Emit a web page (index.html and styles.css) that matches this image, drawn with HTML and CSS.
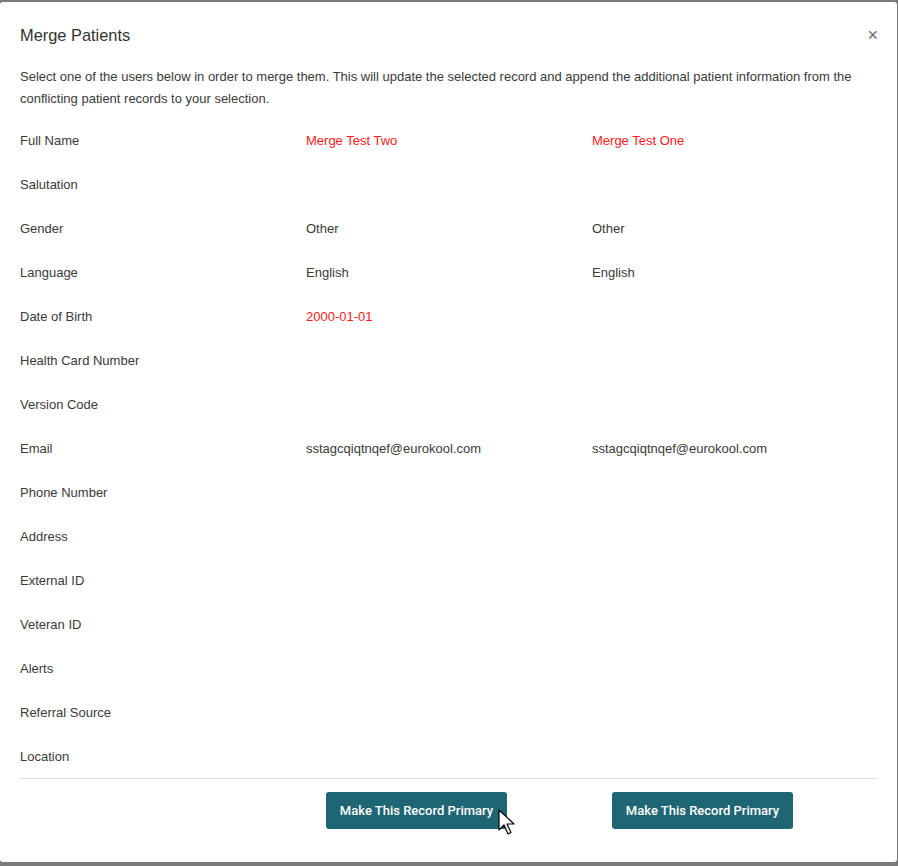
FILE: index.html
```html
<!DOCTYPE html>
<html>
<head>
<meta charset="utf-8">
<link rel="stylesheet" href="styles.css">
</head>
<body>
<div class="modal">
  <div class="modal-header">
    <h2 class="title">Merge Patients</h2>
    <span class="close">&times;</span>
  </div>
  <div class="modal-body">
    <p class="desc">Select one of the users below in order to merge them. This will update the selected record and append the additional patient information from the conflicting patient records to your selection.</p>
    <div class="rows">
      <div class="row"><div>Full Name</div><div class="diff">Merge Test Two</div><div class="diff">Merge Test One</div></div>
      <div class="row"><div>Salutation</div><div></div><div></div></div>
      <div class="row"><div>Gender</div><div>Other</div><div>Other</div></div>
      <div class="row"><div>Language</div><div>English</div><div>English</div></div>
      <div class="row"><div>Date of Birth</div><div class="diff">2000-01-01</div><div></div></div>
      <div class="row"><div>Health Card Number</div><div></div><div></div></div>
      <div class="row"><div>Version Code</div><div></div><div></div></div>
      <div class="row"><div>Email</div><div>sstagcqiqtnqef@eurokool.com</div><div>sstagcqiqtnqef@eurokool.com</div></div>
      <div class="row"><div>Phone Number</div><div></div><div></div></div>
      <div class="row"><div>Address</div><div></div><div></div></div>
      <div class="row"><div>External ID</div><div></div><div></div></div>
      <div class="row"><div>Veteran ID</div><div></div><div></div></div>
      <div class="row"><div>Alerts</div><div></div><div></div></div>
      <div class="row"><div>Referral Source</div><div></div><div></div></div>
      <div class="row"><div>Location</div><div></div><div></div></div>
    </div>
    <div class="actions">
      <div></div>
      <div class="btn-cell"><button class="btn">Make This Record Primary</button>
        <svg class="cursor" width="20" height="28" viewBox="0 0 20 28"><path d="M1 1 L1 21 L6 16 L10 25 L13 23.5 L9 15 L16 15 Z" fill="#fff" stroke="#000" stroke-width="1.2" stroke-linejoin="round"/></svg>
      </div>
      <div class="btn-cell"><button class="btn">Make This Record Primary</button></div>
    </div>
  </div>
</div>
</body>
</html>
```
FILE: styles.css
```css
html, body {
  margin: 0;
  padding: 0;
  background: #7b7b7b;
  height: 866px;
  overflow: hidden;
}
body {
  padding-top: 2px;
  box-sizing: border-box;
  font-family: "Liberation Sans", Arial, sans-serif;
  color: #3a3a3a;
}
.modal {
  width: 897px;
  height: 860px;
  background: #fff;
  border-radius: 3px;
  box-sizing: border-box;
}
.modal-header {
  display: flex;
  align-items: center;
  justify-content: space-between;
  padding: 21px 20px 19px 20px;
}
.title {
  margin: 0;
  font-size: 16.4px;
  font-weight: 400;
  line-height: 24px;
  color: #333;
}
.close {
  font-size: 18px;
  line-height: 24px;
  color: #666;
  margin-right: -1px;
}
.modal-body {
  padding: 0 19px 0 20px;
}
.desc {
  margin: 0 0 8px 0;
  font-size: 13px;
  line-height: 22px;
}
.rows {
  border-bottom: 1px solid #ddd;
}
.row {
  display: grid;
  grid-template-columns: 286px 286px 286px;
  height: 44px;
  align-items: center;
  font-size: 13px;
}
.diff {
  color: #ff1a1a;
}
.actions {
  display: grid;
  grid-template-columns: 286px 286px 286px;
  padding-top: 13px;
}
.btn-cell {
  position: relative;
  padding-left: 20px;
}
.btn {
  background: #1e6674;
  color: #fff;
  border: none;
  border-radius: 3px;
  height: 37px;
  width: 181px;
  font-family: Roboto, "Liberation Sans", Arial, sans-serif;
  font-size: 13px;
  font-weight: 500;
  padding: 0;
  cursor: pointer;
}
.cursor {
  position: absolute;
  left: 192px;
  top: 17px;
}
```
